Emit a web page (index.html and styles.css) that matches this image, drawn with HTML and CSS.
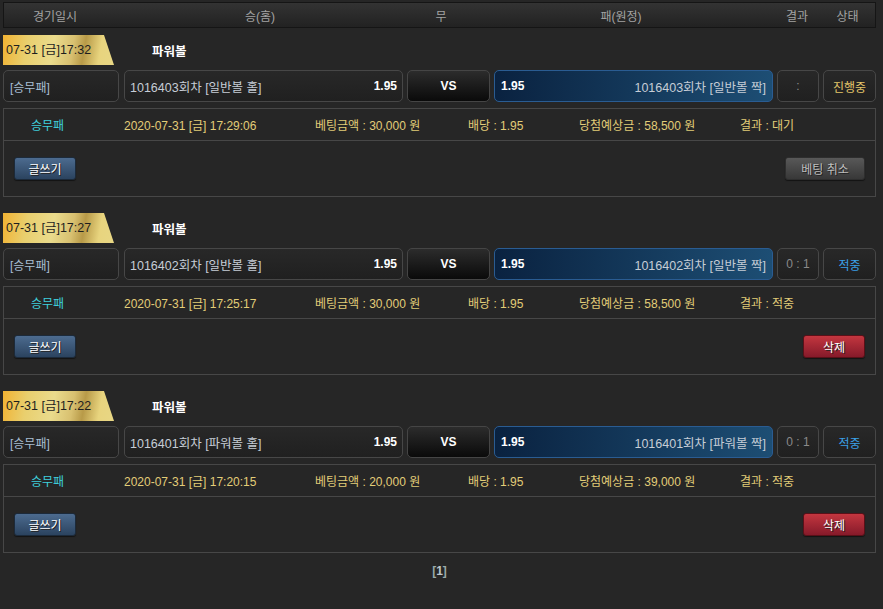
FILE: index.html
```html
<!DOCTYPE html>
<html lang="ko">
<head>
<meta charset="utf-8">
<title>Betting history</title>
<link rel="stylesheet" href="styles.css">
</head>
<body>
<div class="page">
  <div class="thead">
    <div class="th">경기일시</div>
    <div class="th">승(홈)</div>
    <div class="th">무</div>
    <div class="th">패(원정)</div>
    <div class="th">결과</div>
    <div class="th">상태</div>
  </div>

  <div class="block">
    <div class="title">
      <div class="stamp">07-31 [금]17:32</div>
      <div class="league">파워볼</div>
    </div>
    <div class="match">
      <div class="cell type">[승무패]</div>
      <div class="cell home"><span class="team">1016403회차 [일반볼 홀]</span><span class="odd">1.95</span></div>
      <div class="cell vs">VS</div>
      <div class="cell away"><span class="odd">1.95</span><span class="team">1016403회차 [일반볼 짝]</span></div>
      <div class="cell score">:</div>
      <div class="cell state ing">진행중</div>
    </div>
    <div class="info">
      <div class="info-row">
        <span class="i-type">승무패</span>
        <span>2020-07-31 [금] 17:29:06</span>
        <span>베팅금액 : 30,000 원</span>
        <span>배당 : 1.95</span>
        <span>당첨예상금 : 58,500 원</span>
        <span>결과 : 대기</span>
      </div>
      <div class="btn-row">
        <button class="btn blue">글쓰기</button>
        <button class="btn gray">베팅 취소</button>
      </div>
    </div>
  </div>

  <div class="block">
    <div class="title">
      <div class="stamp">07-31 [금]17:27</div>
      <div class="league">파워볼</div>
    </div>
    <div class="match">
      <div class="cell type">[승무패]</div>
      <div class="cell home"><span class="team">1016402회차 [일반볼 홀]</span><span class="odd">1.95</span></div>
      <div class="cell vs">VS</div>
      <div class="cell away"><span class="odd">1.95</span><span class="team">1016402회차 [일반볼 짝]</span></div>
      <div class="cell score">0 : 1</div>
      <div class="cell state win">적중</div>
    </div>
    <div class="info">
      <div class="info-row">
        <span class="i-type">승무패</span>
        <span>2020-07-31 [금] 17:25:17</span>
        <span>베팅금액 : 30,000 원</span>
        <span>배당 : 1.95</span>
        <span>당첨예상금 : 58,500 원</span>
        <span>결과 : 적중</span>
      </div>
      <div class="btn-row">
        <button class="btn blue">글쓰기</button>
        <button class="btn red">삭제</button>
      </div>
    </div>
  </div>

  <div class="block">
    <div class="title">
      <div class="stamp">07-31 [금]17:22</div>
      <div class="league">파워볼</div>
    </div>
    <div class="match">
      <div class="cell type">[승무패]</div>
      <div class="cell home"><span class="team">1016401회차 [파워볼 홀]</span><span class="odd">1.95</span></div>
      <div class="cell vs">VS</div>
      <div class="cell away"><span class="odd">1.95</span><span class="team">1016401회차 [파워볼 짝]</span></div>
      <div class="cell score">0 : 1</div>
      <div class="cell state win">적중</div>
    </div>
    <div class="info">
      <div class="info-row">
        <span class="i-type">승무패</span>
        <span>2020-07-31 [금] 17:20:15</span>
        <span>베팅금액 : 20,000 원</span>
        <span>배당 : 1.95</span>
        <span>당첨예상금 : 39,000 원</span>
        <span>결과 : 적중</span>
      </div>
      <div class="btn-row">
        <button class="btn blue">글쓰기</button>
        <button class="btn red">삭제</button>
      </div>
    </div>
  </div>

  <div class="pager"><span class="br">[</span><span class="cur">1</span><span class="br">]</span></div>
</div>
</body>
</html>
```

FILE: styles.css
```css
* { box-sizing: border-box; }
html, body { margin: 0; padding: 0; background: #262626; }
body {
  font-family: "Liberation Sans", "Noto Sans CJK KR", sans-serif;
  font-size: 12px;
  color: #ccc;
}
.page {
  width: 873px;
  margin-left: 3px;
  padding-top: 2px;
}
.thead {
  display: grid;
  grid-template-columns: 102px 308px 54px 306px 46px 1fr;
  height: 26px;
  border: 1px solid #151515;
  background: linear-gradient(#333333, #222222);
  align-items: center;
}
.th {
  text-align: center;
  color: #a3a3a3;
  font-size: 12px;
}
.block { margin-top: 7px; }
.block + .block { margin-top: 16px; }
.title {
  display: flex;
  align-items: center;
  height: 30px;
}
.stamp {
  width: 111px;
  height: 30px;
  line-height: 30px;
  padding-left: 3px;
  color: #1e1e1e;
  font-size: 12.5px;
  clip-path: polygon(0 0, 101px 0, 111px 100%, 0 100%);
  background: linear-gradient(100deg, #f1b232 0%, #e9cf6e 22%, #eadb8c 45%, #d8c070 62%, #b89a48 72%, #e8d47e 86%, #e8d785 100%);
}
.league {
  margin-left: 38px;
  color: #fff;
  font-weight: bold;
  font-size: 12.5px;
}
.match {
  display: flex;
  margin-top: 5px;
  height: 32px;
}
.cell {
  border: 1px solid #474747;
  border-radius: 5px;
  background: linear-gradient(#282828, #202020);
  display: flex;
  align-items: center;
  height: 32px;
}
.type { width: 116px; padding-left: 6px; color: #a8bed2; }
.home {
  width: 279px; margin-left: 5px;
  justify-content: space-between;
  padding: 0 5px 0 5px;
}
.team { color: #c6cdd6; font-size: 12.5px; }
.odd { color: #fff; font-weight: bold; }
.vs {
  width: 83px; margin-left: 4px;
  justify-content: center;
  color: #fff; font-weight: bold;
  background: linear-gradient(#2c2c2c, #0a0a0a);
  border-color: #454545;
}
.away {
  width: 279px; margin-left: 4px;
  justify-content: space-between;
  padding: 0 6px 0 6px;
  background: linear-gradient(90deg, #0a2240, #1d4e74);
  border-color: #2a5c92;
}
.score {
  width: 42px; margin-left: 4px;
  justify-content: center;
  color: #8a8a8a;
}
.state {
  width: 53px; margin-left: 4px;
  justify-content: center;
}
.state.ing { color: #e3c66a; }
.state.win { color: #3aa0e8; }
.info {
  margin-top: 6px;
  border: 1px solid #474747;
}
.info-row {
  display: grid;
  grid-template-columns: 120px 191px 153px 111px 161px 1fr;
  height: 32px;
  align-items: center;
  border-bottom: 1px solid #474747;
  color: #e2cd78;
}
.info-row .i-type { padding-left: 27px; color: #3fd0dc; }
.btn-row {
  display: flex;
  justify-content: space-between;
  align-items: center;
  height: 55px;
  padding: 0 10px;
}
.btn {
  height: 23px;
  border-radius: 3px;
  font-family: "Liberation Sans", "Noto Sans CJK KR", sans-serif;
  font-size: 12px;
  color: #fff;
  text-shadow: 1px 1px 0 #222;
  padding: 0;
  cursor: pointer;
}
.btn.blue {
  width: 62px;
  border: 1px solid #1c2a3a;
  background: linear-gradient(#4c6b8f, #2b435f);
  box-shadow: 0 1px 1px rgba(0,0,0,.5);
}
.btn.gray {
  width: 80px;
  border: 1px solid #2e2e2e;
  color: #bdbdbd;
  background: linear-gradient(#585858, #383838);
  box-shadow: 0 1px 1px rgba(0,0,0,.5);
}
.btn.red {
  width: 62px;
  border: 1px solid #5a1018;
  background: linear-gradient(#c3363f, #861a2a);
  box-shadow: 0 1px 1px rgba(0,0,0,.5);
}
.pager {
  text-align: center;
  margin-top: 11px;
  font-size: 12px;
  font-weight: bold;
}
.pager .br { color: #9aa; }
.pager .cur { color: #bfc6cc; }
```
